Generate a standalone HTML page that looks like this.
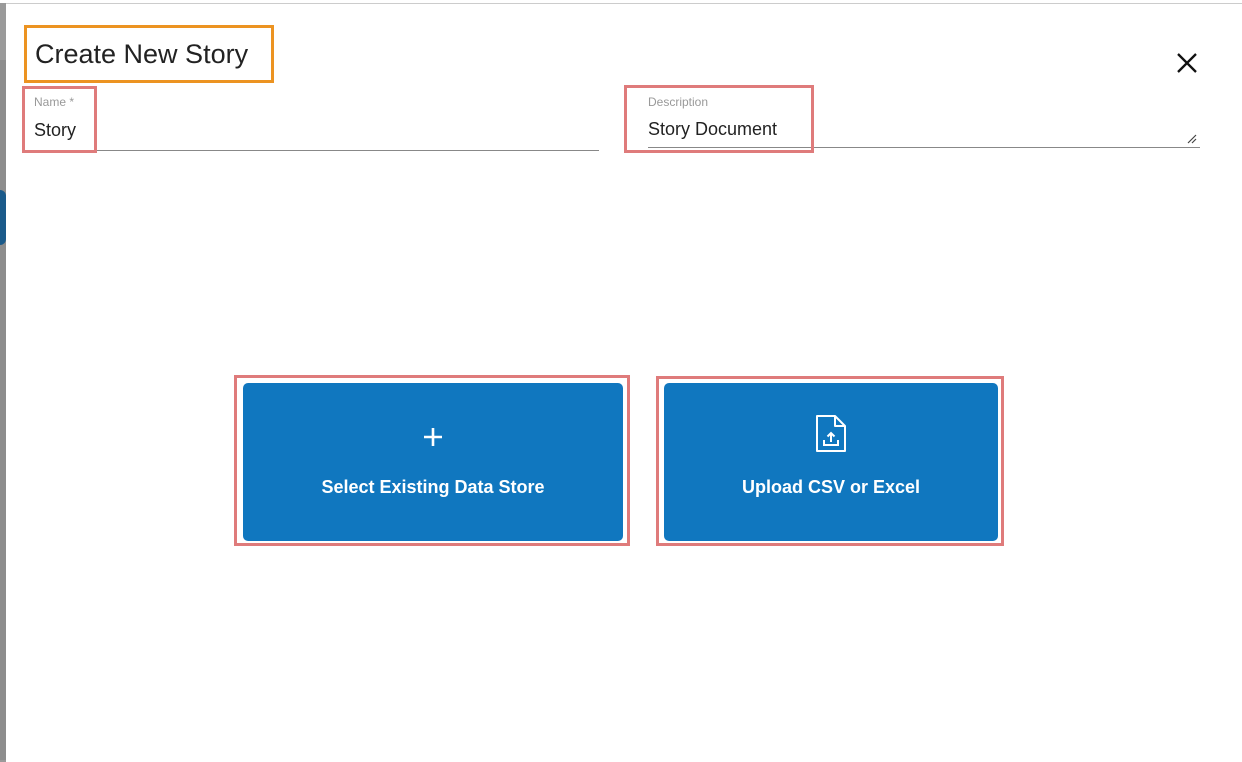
<!DOCTYPE html>
<html><head><style>
body{margin:0;width:1242px;height:761px;background:#9a9a9a;position:relative;overflow:hidden;font-family:"Liberation Sans",sans-serif}
.modal{position:absolute;left:6px;top:3px;width:1236px;height:758px;background:#fff;border-top:1px solid #ccc}
.a{position:absolute;box-sizing:border-box}
.t{position:absolute;white-space:nowrap}
.btn{position:absolute;background:#1077bf;border-radius:5px;color:#fff;font-size:18px;font-weight:bold;text-align:center}
</style></head><body>
<div class="a" style="left:0;top:0;width:1242px;height:3px;background:#fff"></div>
<div class="a" style="left:0;top:60px;width:6px;height:700px;background:#8d8d8d"></div>
<div class="a" style="left:0;top:190px;width:6px;height:55px;background:#1a5a8a;border-radius:0 30px 30px 0"></div>
<div class="modal"></div>
<div class="a" style="left:24px;top:25px;width:250px;height:58px;border:3px solid #ec9321"></div>
<div class="t" style="left:35px;top:39px;font-size:27px;color:#222">Create New Story</div>
<svg class="a" style="left:1176px;top:52px" width="22" height="22"><path d="M2 2L20 20M20 2L2 20" stroke="#111" stroke-width="2.3"/></svg>
<div class="a" style="left:34px;top:150px;width:565px;height:1px;background:#888"></div>
<div class="a" style="left:22px;top:86px;width:75px;height:67px;border:3px solid #df7b7b"></div>
<div class="t" style="left:34px;top:95px;font-size:12px;color:#999">Name *</div>
<div class="t" style="left:34px;top:120px;font-size:18px;color:#222">Story</div>
<div class="a" style="left:648px;top:147px;width:552px;height:1px;background:#888"></div>
<div class="a" style="left:624px;top:85px;width:190px;height:68px;border:3px solid #df7b7b"></div>
<div class="t" style="left:648px;top:95px;font-size:12px;color:#999">Description</div>
<div class="t" style="left:648px;top:119px;font-size:18px;color:#222">Story Document</div>
<svg class="a" style="left:1186px;top:133px" width="12" height="12"><path d="M2 10L10 2M6 10L10 6" stroke="#444" stroke-width="1.2"/></svg>
<div class="a" style="left:234px;top:375px;width:396px;height:171px;border:3px solid #df7b7b"></div>
<div class="btn" style="left:243px;top:383px;width:380px;height:158px">
<svg style="position:absolute;left:180px;top:44px" width="20" height="20"><path d="M10 1V19M1 10H19" stroke="#fff" stroke-width="2.6"/></svg>
<div style="position:absolute;left:0;right:0;top:94px">Select Existing Data Store</div></div>
<div class="a" style="left:656px;top:376px;width:348px;height:170px;border:3px solid #df7b7b"></div>
<div class="btn" style="left:664px;top:383px;width:334px;height:158px">
<svg style="position:absolute;left:151px;top:31px" width="32" height="40"><path d="M2 2H20L30 12V37H2Z M20 2V12H30" fill="none" stroke="#fff" stroke-width="2" stroke-linejoin="round"/><path d="M9 26V31H23V26M16 28V19M12.5 22.5L16 19L19.5 22.5" fill="none" stroke="#fff" stroke-width="2"/></svg>
<div style="position:absolute;left:0;right:0;top:94px">Upload CSV or Excel</div></div>
</body></html>
